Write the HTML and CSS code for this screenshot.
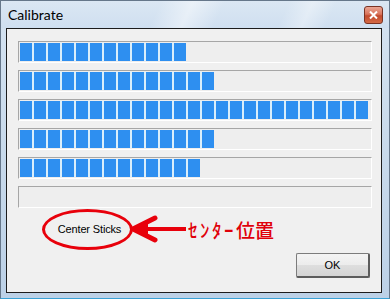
FILE: index.html
```html
<!DOCTYPE html>
<html lang="ja">
<head>
<meta charset="utf-8">
<title>Calibrate</title>
<link rel="stylesheet" href="styles.css">
</head>
<body>
<div class="window">
  <div class="titlebar">
    <span class="title">Calibrate</span>
    <span class="close">
      <svg width="9" height="8" viewBox="0 0 9 8"><path d="M1 0.5 L8 7.5 M8 0.5 L1 7.5" stroke="#fff" stroke-width="2" fill="none"/></svg>
    </span>
  </div>
  <div class="client">
    <div class="bars">
      <div class="bar"><div class="fill" style="width:166px"></div></div>
      <div class="bar"><div class="fill" style="width:194px"></div></div>
      <div class="bar"><div class="fill" style="width:348px"></div></div>
      <div class="bar"><div class="fill" style="width:194px"></div></div>
      <div class="bar"><div class="fill" style="width:180px"></div></div>
      <div class="bar"><div class="fill" style="width:0px"></div></div>
    </div>
    <div class="note">
      <div class="ellipse">Center Sticks</div>
      <svg class="arrow" width="58" height="41" viewBox="0 0 58 41">
        <line x1="10" y1="20" x2="56" y2="20" stroke="#e8000b" stroke-width="4"/>
        <polyline points="25,9 3,20 25,31" fill="none" stroke="#e8000b" stroke-width="5" stroke-linejoin="round" stroke-linecap="round"/>
        <polygon points="3,20 18,12 18,28" fill="#e8000b"/>
      </svg>
      <span class="jp"><span class="kana">ｾﾝﾀｰ</span>位置</span>
    </div>
    <div class="actions">
      <button class="ok" type="button">OK</button>
    </div>
  </div>
</div>
</body>
</html>
```

FILE: styles.css
```css
html, body {
  margin: 0;
  padding: 0;
  background: #ffffff;
}

.window {
  width: 390px;
  height: 299px;
  box-sizing: border-box;
  border: 1px solid #66778a;
  border-bottom-color: #3aa2d6;
  background: linear-gradient(to bottom, #d5e3f1 0%, #c6d8ea 60%, #bcd1e7 100%);
  display: flex;
  flex-direction: column;
  overflow: hidden;
}

.titlebar {
  height: 27px;
  flex: none;
  display: flex;
  align-items: flex-start;
  padding-left: 7px;
  background:
    linear-gradient(115deg, rgba(255,255,255,0) 0%, rgba(255,255,255,0) 40%, rgba(255,255,255,0.45) 48%, rgba(255,255,255,0) 56%, rgba(255,255,255,0) 72%, rgba(255,255,255,0.35) 78%, rgba(255,255,255,0) 84%),
    linear-gradient(to bottom, #dbe7f3 0%, #cfdff0 100%);
}

.title {
  font-family: Lato, "Liberation Sans", sans-serif;
  font-size: 14px;
  line-height: 17px;
  margin-top: 5px;
  color: #000;
}

.close {
  margin-left: auto;
  margin-right: 6px;
  margin-top: 5px;
  width: 19px;
  height: 18px;
  box-sizing: border-box;
  border: 1px solid #7a3324;
  border-radius: 3px;
  background: linear-gradient(to bottom, #eaa593 0%, #d9745c 45%, #c24a2e 55%, #d46a45 100%);
  display: flex;
  align-items: center;
  justify-content: center;
}

.client {
  margin-left: 5px;
  width: 376px;
  height: 265px;
  flex: none;
  box-sizing: border-box;
  border: 1px solid #1c1c1c;
  background: #f0f0f0;
  padding: 12px 9px 0 11px;
  display: flex;
  flex-direction: column;
}

.bars {
  display: flex;
  flex-direction: column;
  gap: 7px;
}

.bar {
  height: 22px;
  box-sizing: border-box;
  border: 1px solid;
  border-color: #a6a6a6 #ffffff #ffffff #a6a6a6;
  padding: 1px;
  background: #eeeeee;
}

.fill {
  height: 18px;
  background: repeating-linear-gradient(to right, #2e8ff0 0, #2e8ff0 12px, #d9eefb 12px, #d9eefb 14px);
}

.note {
  height: 41px;
  margin-top: 1px;
  display: flex;
  align-items: center;
  padding-left: 24px;
}

.ellipse {
  width: 91px;
  height: 41px;
  box-sizing: border-box;
  border: 3px solid #e8000b;
  border-radius: 50%;
  display: flex;
  align-items: center;
  justify-content: center;
  padding-left: 4px;
  padding-bottom: 1px;
  font-family: "Liberation Sans", Arial, sans-serif;
  font-size: 11px;
  letter-spacing: -0.15px;
  color: #000;
  flex: none;
}

.arrow {
  display: block;
  margin-left: -3px;
  flex: none;
}

.jp {
  font-family: "Noto Sans CJK JP", sans-serif;
  font-size: 19px;
  font-weight: 500;
  line-height: 22px;
  color: #e0000a;
  margin-left: 0;
  white-space: nowrap;
}

.kana {
  letter-spacing: 2.5px;
}

.actions {
  display: flex;
  justify-content: flex-end;
  margin-top: 3px;
  padding-right: 2px;
}

.ok {
  width: 74px;
  height: 25px;
  box-sizing: border-box;
  margin: 0;
  border: 1px solid #7c7c7c;
  border-right: 2px solid #5c5c5c;
  border-bottom: 2px solid #5c5c5c;
  border-radius: 2px;
  background: linear-gradient(to bottom, #f4f4f4 0%, #ececec 50%, #dedede 51%, #d4d4d4 100%);
  font-family: "Liberation Sans", Arial, sans-serif;
  font-size: 11px;
  color: #000;
  padding: 0;
}
```
